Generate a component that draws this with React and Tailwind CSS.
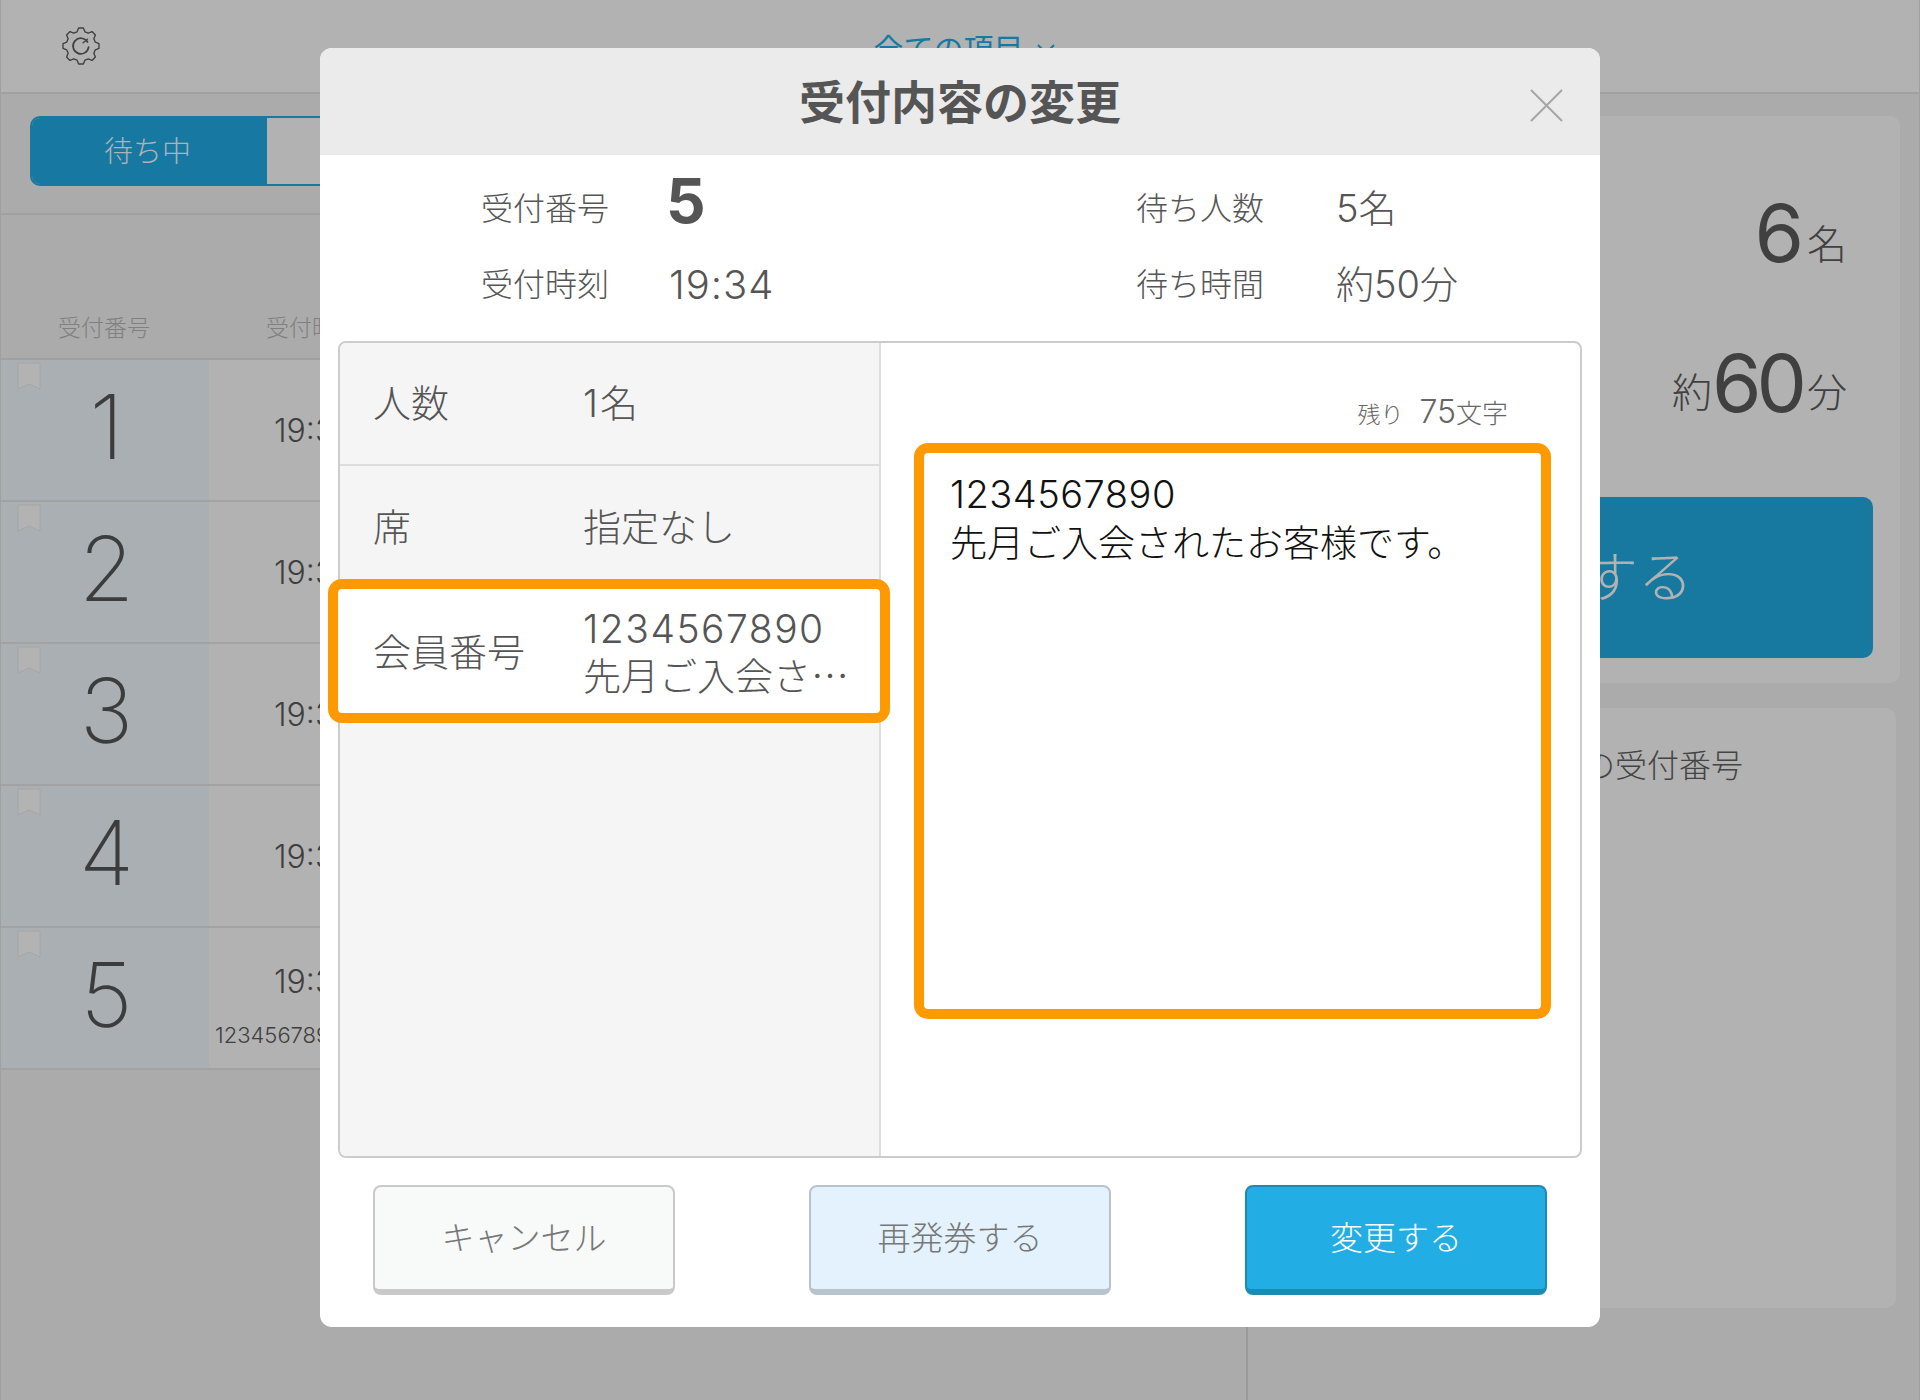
import React from "react";

function Bookmark() {
  return (
    <svg className="absolute left-[16px] top-[2px]" width="24" height="28" viewBox="0 0 24 28">
      <path d="M1 1H23V27L12 22L1 27Z" fill="#b3b3b3" stroke="#a6a6a6" strokeWidth="1" />
    </svg>
  );
}

function Gear() {
  const n = 8;
  const cx = 18, cy = 18, ro = 17.2, ri = 14;
  let d = "";
  for (let i = 0; i < n; i++) {
    const a = (i * 2 * Math.PI) / n - Math.PI / 2;
    const w = 0.2, w2 = 0.13;
    const pts = [
      [ri, a - w - 0.07],
      [ro, a - w2],
      [ro, a + w2],
      [ri, a + w + 0.07],
    ];
    pts.forEach(([r, t], j) => {
      const x = (cx + r * Math.cos(t)).toFixed(2);
      const y = (cy + r * Math.sin(t)).toFixed(2);
      d += (i === 0 && j === 0 ? "M" : "L") + x + " " + y + " ";
    });
  }
  d += "Z";
  return (
    <svg width="38" height="38" viewBox="0 0 36 36" fill="none" stroke="#404040" strokeWidth="1.3" strokeLinejoin="round">
      <path d={d} />
      <path d="M24.2 14.2A7.4 7.4 0 1 0 25.2 19" strokeWidth="1.6" strokeLinecap="round" />
      <path d="M20 15L24.2 11.6" strokeWidth="1.3" strokeLinecap="round" />
    </svg>
  );
}

function Row({ n, extra }) {
  return (
    <div className="relative flex h-[142px] border-b-2 border-[#a2a2a2] bg-[#b2b2b2]">
      <div className="w-[208px] bg-[#a9afb3] flex items-center justify-center pb-[6px] pl-[3px] text-[90px] leading-none font-extralight text-[#3c3c3c]">
        {n}
      </div>
      <Bookmark />
      <div className={"flex-1 flex flex-col pl-[65px] text-[32px] leading-[38px] font-light text-[#3f3f3f] " + (extra ? "pt-[35px]" : "pt-[52px]")}>
        <div>19:34</div>
        {extra && <div className="-ml-[59px] mt-[21px] text-[22px] leading-[26px]">1234567890</div>}
      </div>
    </div>
  );
}

function Button({ className, children }) {
  return (
    <div className={"w-[302px] h-[110px] rounded-[8px] border-2 border-b-[6px] flex items-center justify-center pt-[1px] text-[33px] " + className}>
      {children}
    </div>
  );
}

export default function App() {
  return (
    <div className="relative w-[1920px] h-[1400px] overflow-hidden bg-[#ababab] font-[Inter,'Noto_Sans_CJK_JP',sans-serif] font-light">
      {/* background page */}
      <div className="h-[94px] grid grid-cols-[1fr_auto_1fr] items-center bg-[#b2b2b2] border-b-2 border-[#a0a0a0] border-x border-x-[#a0a0a0]">
        <div className="pl-[61px]"><Gear /></div>
        <div className="pt-[6px] pl-[8px] flex items-center gap-[13px] text-[30px] text-[#1779a2] font-normal">
          <span>全ての項目</span>
          <svg width="18" height="11" viewBox="0 0 18 11" fill="none" stroke="#1779a2" strokeWidth="2"><path d="M1 1L9 9L17 1" /></svg>
        </div>
        <div />
      </div>
      <div className="flex h-[1306px] border-x border-x-[#a0a0a0]">
        <div className="w-[1247px] border-r-2 border-[#999999]">
          <div className="h-[121px] pt-[22px] pl-[29px] border-b-2 border-[#a0a0a0]">
            <div className="flex w-[800px] h-[70px] rounded-[10px] border-2 border-[#1779a2] overflow-hidden">
              <div className="w-[235px] bg-[#1779a2] flex items-center justify-center pr-[4px] pt-[2px] text-[29px] text-[#b2b2b2]">待ち中</div>
              <div className="flex-1 bg-[#b2b2b2]" />
            </div>
          </div>
          <div className="flex h-[145px] items-end pb-[17px] border-b-2 border-[#a0a0a0] text-[23px] leading-[26px] text-[#808080]">
            <div className="w-[265px] pl-[57px]">受付番号</div>
            <div>受付時刻</div>
          </div>
          <Row n="1" />
          <Row n="2" />
          <Row n="3" />
          <Row n="4" />
          <Row n="5" extra />
        </div>
        <div className="flex-1 pt-[22px] flex flex-col">
          <div className="h-[567px] w-[652px] bg-[#b2b2b2] rounded-[10px] flex flex-col items-end pr-[53px]">
            <div className="mt-[67px] flex items-baseline text-[#404040] h-[100px]">
              <span className="text-[80px] leading-[100px] font-normal tracking-[-3px]">6</span>
              <span className="ml-[6px] text-[40px] -translate-y-[3px]">名</span>
            </div>
            <div className="mt-[50px] flex items-baseline text-[#404040] h-[100px]">
              <span className="text-[40px] -translate-y-[5px]">約</span>
              <span className="text-[80px] leading-[100px] font-normal tracking-[-5px]">60</span>
              <span className="ml-[5px] text-[40px] -translate-y-[5px]">分</span>
            </div>
            <div className="self-start mt-[64px] ml-[19px] w-[606px] h-[161px] rounded-[10px] bg-[#17799f] flex items-center justify-center pl-[26px] text-[55px] text-[#b2b2b2]">
              受付する
            </div>
          </div>
          <div className="mt-[25px] h-[600px] w-[648px] bg-[#b2b2b2] rounded-[10px] flex justify-end pr-[153px] pt-[38px] text-[32px] leading-[40px] text-[#444444]">
            お呼び出し中の受付番号
          </div>
        </div>
      </div>

      {/* modal */}
      <div className="absolute left-[320px] top-[48px] w-[1280px] h-[1279px] bg-white rounded-[12px] flex flex-col">
        <div className="relative h-[107px] shrink-0 rounded-t-[12px] bg-[#ebebeb] flex items-center justify-center pt-[1px] text-[46px] font-bold text-[#555555]">
          受付内容の変更
          <svg className="absolute left-[1210px] top-[41px]" width="33" height="33" viewBox="0 0 33 33" fill="none" stroke="#a6a6a6" strokeWidth="2">
            <path d="M1 1L32 32M32 1L1 32" />
          </svg>
        </div>

        <div className="h-[186px] shrink-0 pt-[16px] pl-[161px] grid grid-cols-[188px_467px_200px_1fr] auto-rows-[76px] items-center text-[40px] text-[#555555]">
          <div className="text-[32px]">受付番号</div>
          <div className="text-[62px] leading-none font-bold -mt-[17px] -ml-[3px]">5</div>
          <div className="text-[32px]">待ち人数</div>
          <div className="text-[38px] -mt-[2px]">5名</div>
          <div className="text-[32px]">受付時刻</div>
          <div className="tracking-[1px]">19:34</div>
          <div className="text-[32px]">待ち時間</div>
          <div className="text-[38px] -mt-[2px]">約50分</div>
        </div>

        <div className="mx-[18px] h-[817px] shrink-0 flex rounded-[8px] border-2 border-[#cccccc] text-[38px] text-[#555555]">
          <div className="w-[541px] shrink-0 bg-[#f5f5f5] rounded-l-[6px] border-r-2 border-[#dddddd]">
            <div className="h-[123px] border-b-2 border-[#dddddd] flex items-center pl-[33px]">
              <div className="w-[210px]">人数</div>
              <div><span className="tracking-[2px]">1</span>名</div>
            </div>
            <div className="h-[113px] flex items-center pl-[33px] pt-[10px]">
              <div className="w-[210px]">席</div>
              <div>指定なし</div>
            </div>
            <div className="relative -ml-[12px] w-[562px] h-[144px] bg-white rounded-[14px] border-[10px] border-[#ff9900] flex items-center pl-[35px] pt-[2px]">
              <div className="w-[210px] shrink-0">会員番号</div>
              <div className="leading-[45px] whitespace-nowrap">
                <div className="text-[39px] tracking-[1.5px]">1234567890</div>
                <div>先月ご入会さ<span className="font-['Noto_Sans_CJK_JP',sans-serif]">…</span></div>
              </div>
            </div>
          </div>
          <div className="flex-1 flex flex-col pl-[33px] pr-[28px]">
            <div className="h-[100px] flex items-baseline justify-end pt-[45px] pr-[44px] text-[#666666]">
              <span className="text-[23px]">残り</span>
              <span className="ml-[16px] text-[32px]">75</span>
              <span className="text-[26px]">文字</span>
            </div>
            <div className="w-[637px] h-[576px] rounded-[14px] border-[10px] border-[#ff9900] pl-[26px] pt-[16px] text-[37px] leading-[50px] text-[#111111]">
              <div className="text-[38px] tracking-[0.5px]">1234567890</div>
              <div>先月ご入会されたお客様です。</div>
            </div>
          </div>
        </div>

        <div className="flex justify-between pl-[53px] pr-[53px] pt-[27px]">
          <Button className="bg-[#f8fafa] border-[#c9c9c9] text-[#777777]">キャンセル</Button>
          <Button className="bg-[#e3f2fd] border-[#b8c4cd] text-[#777777]">再発券する</Button>
          <Button className="bg-[#22aee5] border-[#1b8ab5] text-white">変更する</Button>
        </div>
      </div>
    </div>
  );
}
